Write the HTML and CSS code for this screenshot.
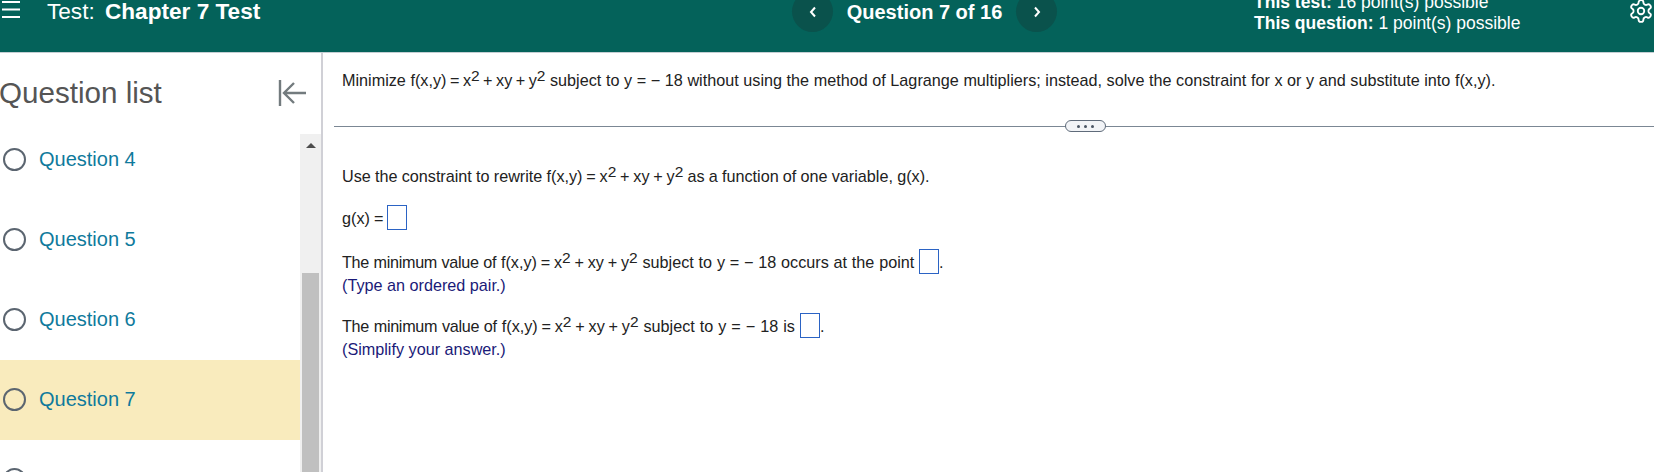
FILE: index.html
```html
<!DOCTYPE html>
<html lang="en">
<head>
    <meta charset="UTF-8">
    <title>Test: Chapter 7 Test</title>
    <link rel="stylesheet" href="styles.css">
</head>
<body>
    <header class="top-bar">
        <svg class="menu-icon" width="20" height="20" viewBox="0 0 20 20">
            <path d="M2 2h18M2 9.500h18M2 17h18" stroke="#fff" stroke-width="2" fill="none"/>
        </svg>
        <div class="test-title">Test: <b>Chapter 7 Test</b></div>
        <div class="pager">
            <button class="pager-btn">
                <svg width="10" height="12" viewBox="0 0 10 12"><path d="M7 1.500 3 6l4 4.500" stroke="#fff" stroke-width="2" fill="none"/></svg>
            </button>
            <div class="pager-label">Question 7 of 16</div>
            <button class="pager-btn">
                <svg width="10" height="12" viewBox="0 0 10 12"><path d="M3 1.500 7 6l-4 4.500" stroke="#fff" stroke-width="2" fill="none"/></svg>
            </button>
        </div>
        <div class="points">
            <div><b>This test:</b> 16 point(s) possible</div>
            <div><b>This question:</b> 1 point(s) possible</div>
        </div>
        <svg class="gear-icon" width="26" height="26" viewBox="0 0 24 24" fill="none" stroke="#fff" stroke-width="1.700">
            <path d="M12.220 2h-.44a2 2 0 0 0-2 2v.18a2 2 0 0 1-1 1.730l-.43.25a2 2 0 0 1-2 0l-.15-.08a2 2 0 0 0-2.730.73l-.22.38a2 2 0 0 0 .73 2.730l.15.1a2 2 0 0 1 1 1.720v.51a2 2 0 0 1-1 1.740l-.15.09a2 2 0 0 0-.73 2.730l.22.38a2 2 0 0 0 2.730.73l.15-.08a2 2 0 0 1 2 0l.43.25a2 2 0 0 1 1 1.730V20a2 2 0 0 0 2 2h.44a2 2 0 0 0 2-2v-.18a2 2 0 0 1 1-1.730l.43-.25a2 2 0 0 1 2 0l.15.08a2 2 0 0 0 2.730-.73l.22-.39a2 2 0 0 0-.73-2.730l-.15-.08a2 2 0 0 1-1-1.740v-.5a2 2 0 0 1 1-1.740l.15-.09a2 2 0 0 0 .73-2.730l-.22-.38a2 2 0 0 0-2.730-.73l-.15.08a2 2 0 0 1-2 0l-.43-.25a2 2 0 0 1-1-1.730V4a2 2 0 0 0-2-2z"/>
            <circle cx="12" cy="12" r="3"/>
        </svg>
    </header>

    <div class="page">
        <aside class="sidebar">
            <div class="sidebar-head">
                <h2>Question list</h2>
                <svg width="28" height="28" viewBox="0 0 28 28">
                    <path d="M2 1v26M28 14H7M16 4 6 14l10 10" stroke="#737b7e" stroke-width="2.400" fill="none"/>
                </svg>
            </div>
            <div class="sidebar-body">
                <ul class="question-list">
                    <li><span class="dot"></span>Question 4</li>
                    <li><span class="dot"></span>Question 5</li>
                    <li><span class="dot"></span>Question 6</li>
                    <li class="current"><span class="dot"></span>Question 7</li>
                    <li><span class="dot"></span></li>
                </ul>
                <div class="scrollbar">
                    <div class="scroll-up"></div>
                    <div class="scroll-thumb"></div>
                </div>
            </div>
        </aside>

        <main class="content">
            <p class="intro">Minimize <span class="math">f(x,y) = x<sup>2</sup> + xy + y<sup>2</sup></span> subject to y = &minus; 18 without using the method of Lagrange multipliers; instead, solve the constraint for x or y and substitute into f(x,y).</p>

            <div class="divider"><span class="more"><i></i><i></i><i></i></span></div>

            <p class="step-first">Use the constraint to rewrite <span class="math">f(x,y) = x<sup>2</sup> + xy + y<sup>2</sup></span> as a function of one variable, g(x).</p>
            <p class="step-input">g(x) = <span class="answer"></span></p>
            <p class="step"><span class="lead">The minimum value of</span> <span class="math">f(x,y) = x<sup>2</sup> + xy + y<sup>2</sup></span> subject to y = &minus; 18 occurs at the point <span class="answer"></span>.</p>
            <p class="hint">(Type an ordered pair.)</p>
            <p class="step step-last"><span class="lead">The minimum value of</span> <span class="math">f(x,y) = x<sup>2</sup> + xy + y<sup>2</sup></span> subject to y = &minus; 18 is <span class="answer"></span>.</p>
            <p class="hint hint-last">(Simplify your answer.)</p>
        </main>
    </div>
</body>
</html>
```

FILE: styles.css
```css
* {
    margin: 0;
    padding: 0;
    box-sizing: border-box;
}

body {
    width: 1654px;
    height: 472px;
    overflow: hidden;
    background-color: #fff;
    font-family: "Liberation Sans", Arial, sans-serif;
    color: #222;
}

/* Top bar */
.top-bar {
    height: 53px;
    display: flex;
    align-items: flex-start;
    background-color: #04625a;
    border-bottom: 1px solid #c5ced3;
    color: #fff;
    overflow: hidden;
}

.menu-icon {
    flex: none;
}

.test-title {
    width: 745px;
    margin-left: 27px;
    font-size: 22.600px;
    line-height: 23px;
}

.test-title b {
    margin-left: 4px;
}

.pager {
    display: flex;
    align-items: flex-start;
    margin-top: -9px;
}

.pager-btn {
    width: 41px;
    height: 41px;
    border: none;
    border-radius: 50%;
    background-color: #0a524c;
    display: flex;
    align-items: center;
    justify-content: center;
}

.pager-label {
    width: 183px;
    padding-top: 10px;
    text-align: center;
    font-size: 20px;
    line-height: 23px;
    font-weight: bold;
}

.points {
    width: 374px;
    margin-left: 197px;
    margin-top: -8px;
    font-size: 17.500px;
    line-height: 21px;
}

.gear-icon {
    flex: none;
    margin-top: -2px;
}

/* Main area */
.page {
    display: flex;
    height: 419px;
}

.sidebar {
    width: 323px;
    flex: none;
    border-right: 2px solid #d0d0d6;
    display: flex;
    flex-direction: column;
}

.sidebar-head {
    height: 67px;
    flex: none;
    display: flex;
    align-items: center;
    justify-content: space-between;
    padding: 13px 15px 0 0;
}

.sidebar-head h2 {
    margin-left: -1px;
    font-size: 29.600px;
    font-weight: normal;
    color: #555;
}

.sidebar-body {
    flex: 1;
    display: flex;
    min-height: 0;
}

.question-list {
    width: 300px;
    list-style: none;
}

.question-list li {
    height: 80px;
    padding-bottom: 1px;
    display: flex;
    align-items: center;
    font-size: 20px;
    color: #0f7a9c;
}

.question-list .current {
    background-color: #f9ebbd;
}

.dot {
    width: 23px;
    height: 23px;
    margin: 0 13px 0 3px;
    border: 2.800px solid #5b6570;
    border-radius: 50%;
}

.scrollbar {
    width: 21px;
    margin-top: 14px;
    background-color: #f0f0f0;
    display: flex;
    flex-direction: column;
    align-items: center;
}

.scroll-up {
    margin-top: 9px;
    border-left: 5px solid transparent;
    border-right: 5px solid transparent;
    border-bottom: 5px solid #4d4d4d;
}

.scroll-thumb {
    width: 17px;
    height: 200px;
    margin-top: 125px;
    background-color: #c0c0c0;
}

/* Question */
.content {
    flex: 1;
    min-width: 0;
    font-size: 16.200px;
    line-height: 20px;
    white-space: nowrap;
}

.content p {
    padding-left: 19px;
}

.content sup {
    font-size: 15.500px;
    line-height: 0;
    vertical-align: 5px;
}

.math {
    word-spacing: -0.7px;
}

.lead {
    letter-spacing: -0.3px;
}

.intro {
    margin-top: 17px;
    word-spacing: 0.1px;
}

.intro .math {
    word-spacing: -1px;
}

.divider {
    height: 1px;
    margin: 36px 0 0 11px;
    background-color: #7b8794;
    position: relative;
}

.more {
    position: absolute;
    left: 731px;
    top: -6px;
    width: 41px;
    height: 12px;
    background-color: #f2f4f7;
    border: 1px solid #5f6b7a;
    border-radius: 6px;
    display: flex;
    align-items: center;
    justify-content: center;
    gap: 4px;
}

.more i {
    width: 3px;
    height: 3px;
    border-radius: 50%;
    background-color: #4a5563;
}

.step-first {
    margin-top: 39px;
    word-spacing: -0.3px;
}

.step-input {
    margin-top: 19px;
    word-spacing: -0.5px;
}

.step {
    margin-top: 19px;
    word-spacing: 0.3px;
}

.step-last {
    margin-top: 18px;
    word-spacing: 0.5px;
}

.hint {
    margin-top: 1px;
    color: #1a1a78;
}

.answer {
    display: inline-block;
    width: 20px;
    height: 25px;
    vertical-align: -6px;
    border: 1px solid #2b63c4;
    background-color: #fff;
}
```
